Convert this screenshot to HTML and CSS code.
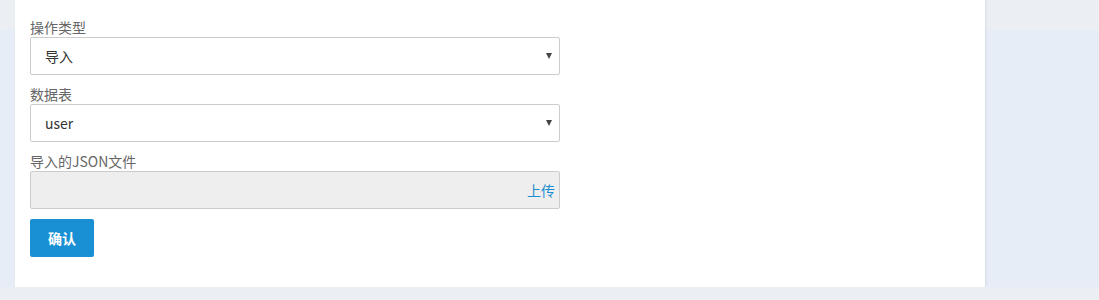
FILE: index.html
```html
<!DOCTYPE html>
<html lang="zh-CN">
<head>
    <meta charset="UTF-8">
    <title>数据导入</title>
    <link rel="stylesheet" href="styles.css">
</head>
<body>
    <div class="panel">
        <div class="form-group">
            <label>操作类型</label>
            <div class="select-box">
                <select>
                    <option>导入</option>
                    <option>导出</option>
                </select>
            </div>
        </div>
        <div class="form-group">
            <label>数据表</label>
            <div class="select-box">
                <select>
                    <option>user</option>
                </select>
            </div>
        </div>
        <div class="form-group">
            <label>导入的JSON文件</label>
            <div class="file-box">
                <a href="#" class="upload">上传</a>
            </div>
        </div>
        <button class="btn-ok">确认</button>
    </div>
</body>
</html>
```

FILE: styles.css
```css
body {
    margin: 0;
    padding: 0 0 0 15px;
    background: linear-gradient(#ebeff3 0, #ebeff3 30px, #e7edf6 30px);
    font-family: "Noto Sans CJK SC", "Liberation Sans", sans-serif;
    font-size: 14px;
    color: #333;
}

.panel {
    width: 940px;
    background-color: #fff;
    padding: 17px 15px 30px 15px;
    box-shadow: 1px 0 2px rgba(180, 195, 215, 0.4);
}

.form-group {
    display: flex;
    flex-direction: column;
    width: 530px;
    margin-bottom: 9px;
}

.form-group label {
    line-height: 20px;
    color: #666;
}

.select-box {
    position: relative;
}

.select-box select {
    appearance: none;
    -webkit-appearance: none;
    width: 100%;
    height: 38px;
    border: 1px solid #ccc;
    border-radius: 2px;
    background-color: #fff;
    padding: 0 14px;
    font-family: inherit;
    font-size: 14px;
    color: #333;
    outline: none;
}

.select-box::after {
    content: "";
    position: absolute;
    right: 8px;
    top: 16px;
    border-left: 3px solid transparent;
    border-right: 3px solid transparent;
    border-top: 6px solid #444;
    pointer-events: none;
}

.file-box {
    display: flex;
    justify-content: flex-end;
    align-items: center;
    box-sizing: border-box;
    height: 38px;
    border: 1px solid #ccc;
    border-radius: 2px;
    background-color: #eee;
    padding-right: 4px;
}

.upload {
    color: #1a8ed0;
    text-decoration: none;
}

.btn-ok {
    margin-top: 1px;
    width: 64px;
    height: 38px;
    border: none;
    border-radius: 2px;
    background-color: #1a90d4;
    color: #fff;
    font-family: inherit;
    font-size: 14px;
    font-weight: bold;
    cursor: pointer;
}
```
